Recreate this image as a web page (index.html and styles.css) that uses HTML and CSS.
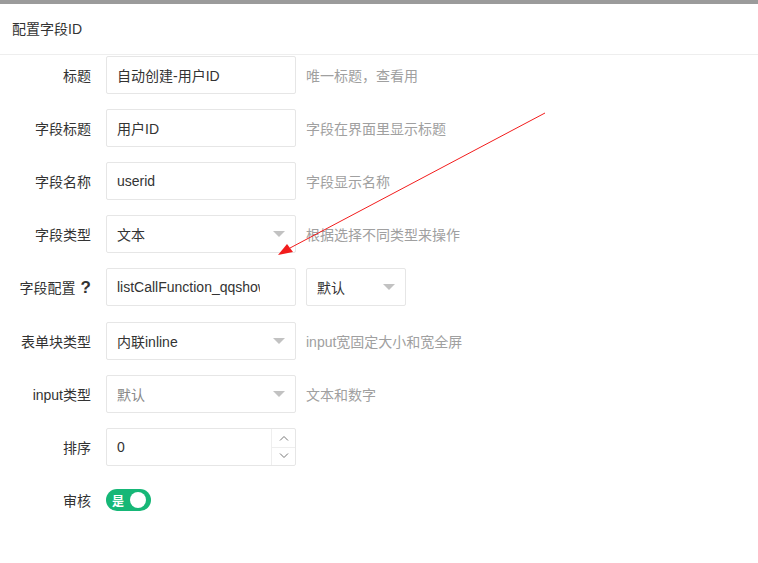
FILE: index.html
```html
<!DOCTYPE html>
<html lang="zh-CN">
<head>
    <meta charset="UTF-8">
    <title>配置字段ID</title>
    <link rel="stylesheet" href="styles.css">
</head>
<body>

    <div class="topbar"></div>

    <!-- Layer title -->
    <div class="layer-title">配置字段ID</div>

    <!-- Form -->
    <form class="form">
        <div class="form-item">
            <label class="form-label">标题</label>
            <div class="input-inline"><input class="input" value="自动创建-用户ID"></div>
            <div class="form-aux">唯一标题，查看用</div>
        </div>

        <div class="form-item">
            <label class="form-label">字段标题</label>
            <div class="input-inline"><input class="input" value="用户ID"></div>
            <div class="form-aux">字段在界面里显示标题</div>
        </div>

        <div class="form-item">
            <label class="form-label">字段名称</label>
            <div class="input-inline"><input class="input" value="userid"></div>
            <div class="form-aux">字段显示名称</div>
        </div>

        <div class="form-item">
            <label class="form-label">字段类型</label>
            <div class="input-inline"><div class="select"><span>文本</span><i class="edge"></i></div></div>
            <div class="form-aux">根据选择不同类型来操作</div>
        </div>

        <div class="form-item config-row">
            <label class="form-label">字段配置<b class="help">?</b></label>
            <div class="input-inline"><input class="input input-clip" value="listCallFunction_qqshow"></div>
            <div class="input-small"><div class="select"><span>默认</span><i class="edge"></i></div></div>
        </div>

        <div class="form-item">
            <label class="form-label">表单块类型</label>
            <div class="input-inline"><div class="select"><span>内联inline</span><i class="edge"></i></div></div>
            <div class="form-aux">input宽固定大小和宽全屏</div>
        </div>

        <div class="form-item">
            <label class="form-label">input类型</label>
            <div class="input-inline"><div class="select placeholder"><span>默认</span><i class="edge"></i></div></div>
            <div class="form-aux">文本和数字</div>
        </div>

        <div class="form-item">
            <label class="form-label">排序</label>
            <div class="input-inline">
                <div class="number">
                    <span>0</span>
                    <div class="spin">
                        <div class="spin-btn"><svg width="10" height="6" viewBox="0 0 10 6"><path d="M1 5.5L5 1.5L9 5.5" fill="none" stroke="#777" stroke-width="1"/></svg></div>
                        <div class="spin-btn"><svg width="10" height="6" viewBox="0 0 10 6"><path d="M1 0.5L5 4.5L9 0.5" fill="none" stroke="#777" stroke-width="1"/></svg></div>
                    </div>
                </div>
            </div>
        </div>

        <div class="form-item switch-row">
            <label class="form-label">审核</label>
            <div class="switch"><em>是</em><i></i></div>
        </div>
    </form>

    <!-- Annotation arrow -->
    <svg class="arrow" width="758" height="563" viewBox="0 0 758 563">
        <line x1="545" y1="113" x2="290" y2="248" stroke="#f21c1c" stroke-width="1"/>
        <polygon points="278,255 287,244 293,252" fill="#f21c1c"/>
    </svg>

</body>
</html>
```

FILE: styles.css
```css
/* Reset */
* {
    margin: 0;
    padding: 0;
    box-sizing: border-box;
}

body {
    font-family: "Liberation Sans", "Noto Sans CJK SC", sans-serif;
    font-size: 14px;
    color: #333;
    background: #fff;
    position: relative;
    height: 563px;
    overflow: hidden;
}

.topbar {
    height: 4px;
    background: #9b9b9b;
}

/* Layer title */
.layer-title {
    height: 51px;
    line-height: 50px;
    padding-left: 12px;
    border-bottom: 1px solid #eee;
    font-size: 14px;
    color: #333;
}

/* Form */
.form {
    padding-top: 1px;
}

.form-item {
    display: flex;
    align-items: center;
    height: 38px;
    margin-bottom: 15px;
}

.config-row {
    margin-bottom: 16px;
}

.form-label {
    width: 91px;
    text-align: right;
    color: #333;
    margin-right: 15px;
    white-space: nowrap;
}

.help {
    font-size: 17px;
    font-weight: bold;
    margin-left: 5px;
    color: #333;
}

.input-inline {
    width: 190px;
    height: 38px;
}

.input-small {
    width: 100px;
    height: 38px;
    margin-left: 10px;
}

.input {
    width: 100%;
    height: 38px;
    border: 1px solid #e6e6e6;
    border-radius: 2px;
    padding: 0 10px;
    font: inherit;
    color: #333;
    outline: none;
    background: #fff;
}

.input-clip {
    padding-right: 35px;
}

.form-aux {
    margin-left: 10px;
    color: #a0a0a0;
    white-space: nowrap;
}

/* Select */
.select {
    position: relative;
    height: 38px;
    border: 1px solid #e6e6e6;
    border-radius: 2px;
    padding: 0 10px;
    display: flex;
    align-items: center;
    color: #333;
}

.select.placeholder {
    color: #888;
}

.select .edge {
    position: absolute;
    right: 10px;
    top: 15px;
    width: 0;
    height: 0;
    border-style: solid;
    border-width: 6px 6px 0;
    border-color: #c2c2c2 transparent transparent;
}

/* Number input */
.number {
    height: 38px;
    border: 1px solid #e6e6e6;
    border-radius: 2px;
    display: flex;
    align-items: center;
    padding-left: 10px;
}

.number span {
    flex: 1;
}

.spin {
    width: 24px;
    height: 36px;
    border-left: 1px solid #eee;
    display: flex;
    flex-direction: column;
}

.spin-btn {
    flex: 1;
    display: flex;
    align-items: center;
    justify-content: center;
}

.spin-btn + .spin-btn {
    border-top: 1px solid #eee;
}

/* Switch */
.switch-row {
    margin-top: 4px;
}

.switch {
    width: 45px;
    height: 22px;
    border-radius: 11px;
    background: #16b777;
    display: flex;
    align-items: center;
    padding: 0 5px 0 6px;
    justify-content: space-between;
}

.switch em {
    font-style: normal;
    color: #fff;
    font-size: 12px;
    font-weight: bold;
}

.switch i {
    width: 16px;
    height: 16px;
    border-radius: 50%;
    background: #fff;
}

/* Annotation */
.arrow {
    position: absolute;
    left: 0;
    top: 0;
    pointer-events: none;
}
```
